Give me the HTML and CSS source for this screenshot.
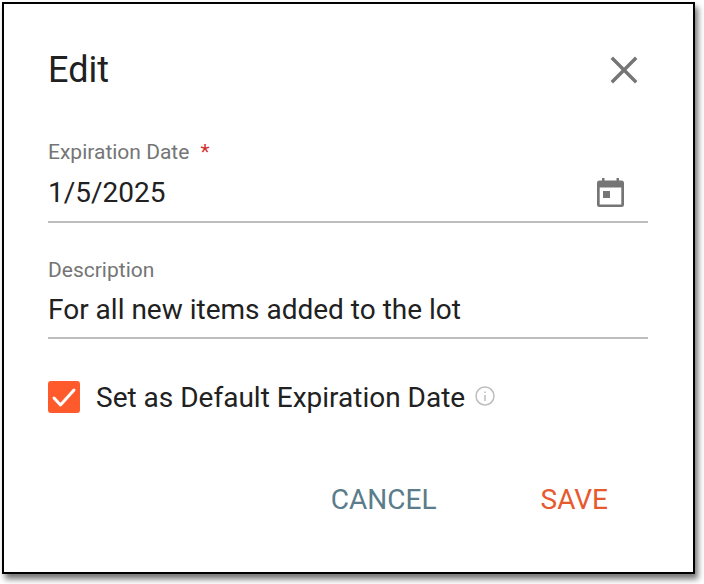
FILE: index.html
```html
<!DOCTYPE html>
<html lang="en">
<head>
    <meta charset="UTF-8">
    <meta name="viewport" content="width=device-width, initial-scale=1.0">
    <title>Edit</title>
    <link rel="stylesheet" href="styles.css">
</head>
<body>
    <div class="dialog">
        <div class="dialog-header">
            <h1 class="dialog-title">Edit</h1>
            <svg class="close-icon" viewBox="0 0 32 32" fill="none" stroke="#757575" stroke-width="3.4" stroke-linecap="square">
                <path d="M5 5L27 27"></path>
                <path d="M27 5L5 27"></path>
            </svg>
        </div>

        <div class="field field-date">
            <label class="field-label">Expiration Date <span class="required">*</span></label>
            <div class="field-input">
                <span>1/5/2025</span>
                <svg class="calendar-icon" viewBox="0 0 27 29" fill="#757575">
                    <path fill-rule="evenodd" d="M5 0h2.500v2.500h12V0H22v2.500h2.500A2.500 2.500 0 0 1 27 5v21.500a2.500 2.500 0 0 1-2.500 2.500h-22A2.500 2.500 0 0 1 0 26.500V5a2.500 2.500 0 0 1 2.500-2.500H5zM2.700 9.500v17h21.600v-17z"></path>
                    <rect x="6" y="13" width="7" height="7"></rect>
                </svg>
            </div>
        </div>

        <div class="field field-description">
            <label class="field-label">Description</label>
            <div class="field-input">
                <span>For all new items added to the lot</span>
            </div>
        </div>

        <div class="default-row">
            <span class="checkbox">
                <svg viewBox="0 0 32 32" fill="none" stroke="#fff" stroke-width="3" stroke-linecap="round" stroke-linejoin="round">
                    <path d="M6 17L12.500 24L26 9"></path>
                </svg>
            </span>
            <span class="default-label">Set as Default Expiration Date</span>
            <svg class="info-icon" viewBox="0 0 20 20" fill="none" stroke="#bdbdbd">
                <circle cx="10" cy="10" r="9" stroke-width="1.500"></circle>
                <path d="M10 9v6" stroke-width="1.500"></path>
                <path d="M10 5.500v1.500" stroke-width="1.500"></path>
            </svg>
        </div>

        <div class="dialog-actions">
            <a class="action action-cancel">CANCEL</a>
            <a class="action action-save">SAVE</a>
        </div>
    </div>
</body>
</html>
```

FILE: styles.css
```css
* {
    margin: 0;
    padding: 0;
    box-sizing: border-box;
}

body {
    font-family: Roboto, 'Liberation Sans', sans-serif;
    background: #fff;
    width: 704px;
    height: 584px;
    overflow: hidden;
    padding: 2px 0 0 2px;
}

.dialog {
    width: 693px;
    height: 572px;
    background: #fff;
    border: 2px solid #000;
    box-shadow: 3px 5px 6px rgba(0, 0, 0, 0.55);
    padding: 0 45px 0 44px;
    display: flex;
    flex-direction: column;
}

.dialog-header {
    display: flex;
    align-items: center;
    justify-content: space-between;
    padding-right: 8px;
    height: 136px;
    padding-bottom: 4px;
}

.dialog-title {
    font-size: 36px;
    font-weight: 400;
    color: #212121;
}

.close-icon {
    width: 32px;
    height: 32px;
}

.field-label {
    display: block;
    font-size: 21px;
    line-height: 24px;
    color: #757575;
}

.required {
    color: #d32f2f;
    margin-left: 6px;
}

.field-input {
    display: flex;
    align-items: center;
    justify-content: space-between;
    font-size: 28px;
    color: #212121;
    border-bottom: 2px solid #bdbdbd;
    padding-right: 24px;
}

.field-date {
    height: 118px;
}

.field-date .field-input {
    height: 59px;
}

.field-description .field-input {
    height: 57px;
}

.calendar-icon {
    width: 27px;
    height: 29px;
}

.default-row {
    display: flex;
    align-items: center;
    margin-top: 42px;
    height: 32px;
}

.checkbox {
    width: 32px;
    height: 32px;
    border-radius: 3px;
    background: #ff5a2b;
    display: flex;
}

.default-label {
    font-size: 28px;
    color: #212121;
    margin-left: 16px;
}

.info-icon {
    width: 20px;
    height: 20px;
    margin-left: 10px;
    margin-bottom: 2px;
}

.dialog-actions {
    display: flex;
    justify-content: flex-end;
    gap: 104px;
    margin-top: 70px;
    padding-right: 40px;
    font-size: 28px;
}

.action-cancel {
    color: #5b7c8a;
}

.action-save {
    color: #e65a2e;
}
```
